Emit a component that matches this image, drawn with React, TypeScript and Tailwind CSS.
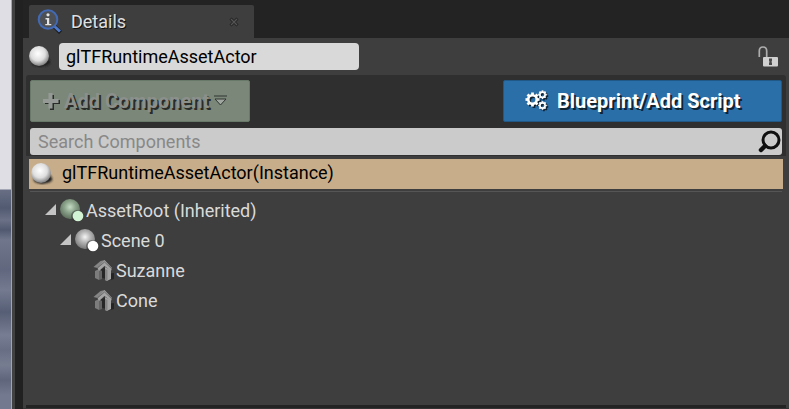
import type { ReactNode } from "react";

function InfoSearchIcon() {
  return (
    <svg width="26" height="26" viewBox="0 0 26 26" className="shrink-0">
      <path d="M17.5 17.5L23.5 23.5" stroke="#151515" strokeWidth="4" />
      <path d="M16.5 16.5L23 22.5" stroke="#4e78c8" strokeWidth="3" />
      <circle cx="11" cy="10.500" r="9.300" fill="#4d5055" stroke="#4269b4" strokeWidth="2" />
      <path d="M8.500 9H12.200V15H14.300V16.300H8.300V15H10V10.500H8.500Z" fill="#e4e4e4" />
      <circle cx="11" cy="5.800" r="1.600" fill="#e4e4e4" />
    </svg>
  );
}

function ActorIcon() {
  return (
    <svg width="24" height="24" viewBox="0 0 24 24" className="shrink-0">
      <defs>
        <radialGradient id="actor" cx="45%" cy="38%" r="60%">
          <stop offset="0" stopColor="#fff" />
          <stop offset=".6" stopColor="#dedede" />
          <stop offset="1" stopColor="#858585" />
        </radialGradient>
        <filter id="actorShade">
          <feGaussianBlur stdDeviation=".8" />
        </filter>
      </defs>
      <path d="M3 17L20 13L22.500 17Q22 21 12 22Q4 21 3 17Z" fill="#202020" filter="url(#actorShade)" />
      <circle cx="11" cy="11" r="10" fill="url(#actor)" />
    </svg>
  );
}

function SceneIcon({ green = false }: { green?: boolean }) {
  const id = green ? "root-sphere" : "scene-sphere";
  return (
    <svg width="26" height="26" viewBox="0 0 26 26" className="shrink-0">
      <defs>
        <radialGradient id={id} cx="50%" cy="40%" r="55%">
          <stop offset="0" stopColor={green ? "#c5dbc5" : "#f5f5f5"} />
          <stop offset=".5" stopColor={green ? "#8da58d" : "#b5b5b5"} />
          <stop offset="1" stopColor={green ? "#637663" : "#808080"} />
        </radialGradient>
      </defs>
      <circle cx="11" cy="11" r="10" fill={`url(#${id})`} />
      <circle cx="18" cy="18" r="6" fill="#333" opacity=".45" />
      <circle cx="19" cy="18" r="5.300" fill={green ? "#d3f3d5" : "#fff"} />
    </svg>
  );
}

function MeshIcon() {
  return (
    <svg width="22" height="24" viewBox="0 0 22 24" className="shrink-0">
      <path d="M13 15L21 14V20L14 22Z" fill="#242424" />
      <path d="M7 11L13 8V20L7 18Z" fill="#272727" />
      <path d="M2 12L6 10V21L2 19Z" fill="#7c7c7c" />
      <path d="M6 10L9 12V20L6 21Z" fill="#646464" />
      <path d="M12 8L18 11V20L14 22L12 21Z" fill="#a3a3a3" />
      <path d="M12 10L14.500 11V22L12 21Z" fill="#858585" />
      <path d="M0.500 8L7.500 2L12 1L4.500 9Z" fill="#858585" />
      <path d="M4.500 9L11.500 1L19 9L18 12L11.500 7L6 12Z" fill="#a5a5a5" />
      <path d="M4.500 9L11.500 3L19 10" fill="none" stroke="#555" strokeWidth=".7" />
    </svg>
  );
}

function LockIcon() {
  return (
    <svg width="21" height="22" viewBox="0 0 21 22" className="shrink-0">
      <path d="M1.300 11V5Q1.300 1 5 1Q8.700 1 8.700 5V12" fill="none" stroke="#adadad" strokeWidth="1.700" />
      <rect x="5" y="11" width="15" height="9.500" rx="1" fill="#d0d0d0" />
      <path d="M11 12.500H14V14.500L13.500 16L14 17V19H11V17L11.500 16L11 14.500Z" fill="#484848" />
    </svg>
  );
}

function gear(cx: number, cy: number, radius: number) {
  return (
    <g transform={`translate(${cx} ${cy})`}>
      <circle r={radius * 0.65} fill="none" stroke="currentColor" strokeWidth={radius * 0.4} />
      {[0, 45, 90, 135, 180, 225, 270, 315].map((angle) => (
        <path
          key={angle}
          d={`M0 ${-radius * 0.65}V${-radius * 1.08}`}
          stroke="currentColor"
          strokeWidth={radius * 0.42}
          transform={`rotate(${angle})`}
        />
      ))}
    </g>
  );
}

function GearsIcon() {
  const gears = <>{gear(7.5, 9.5, 6.5)}{gear(17.5, 4.7, 4)}{gear(17.5, 15.5, 4)}</>;
  return (
    <svg width="25" height="23" viewBox="0 0 25 23" className="shrink-0">
      <g className="text-[#102333]" transform="translate(1.4 1.4)">{gears}</g>
      <g className="text-white">{gears}</g>
    </svg>
  );
}

function TreeRow({ indent, expanded, icon, children }: { indent: string; expanded?: boolean; icon: ReactNode; children: ReactNode }) {
  return (
    <div className={`flex h-[30px] items-center ${indent}`}>
      {expanded && (
        <svg width="14" height="14" viewBox="0 0 14 14" className="mb-[3px] shrink-0">
          <path d="M0 12L11 1V12Z" fill="#c4c4c4" />
        </svg>
      )}
      {icon}
      <span className="whitespace-nowrap pl-[1px] text-[18px] text-[#dadada]">{children}</span>
    </div>
  );
}

export default function App() {
  return (
    <div className="flex h-[409px] w-[789px] overflow-hidden bg-[#3e3e3e] font-[Roboto,sans-serif] leading-none">
      <div className="w-[11px] shrink-0 bg-[linear-gradient(#dedee4_0px,#dedee4_189px,#686f85_190px,#515a71_208px,#6b7187_220px,#505970_230px,#70778d_240px,#60677e_270px,#747b91_290px,#565e75_312px,#777d92_335px,#686e84_350px,#777d91_365px,#5f667c_380px,#73798e_395px)]" />
      <div className="w-px shrink-0 bg-[#d9a323]" />
      <div className="w-[3px] shrink-0 bg-[#414141]" />
      <div className="w-2 shrink-0 bg-[#212121]" />

      <main className="flex w-[766px] flex-col">
        <header className="flex h-[38px] items-end bg-[#232323] pl-[6px]">
          <div className="flex h-[33px] w-[225px] items-center rounded-t-[2px] bg-[#3e3e3e] pl-[8px]">
            <InfoSearchIcon />
            <span className="pl-[8px] text-[18px] text-[#e0e0e0] [text-shadow:1px_1px_#111]">Details</span>
            <svg width="10" height="10" viewBox="0 0 10 10" className="ml-auto mr-[15px]">
              <path d="M1.500 1.500L8.500 8.500M8.500 1.500L1.500 8.500" stroke="#242424" strokeWidth="3" />
              <path d="M2 2L8 8M8 2L2 8" stroke="#555" strokeWidth="1.300" />
            </svg>
          </div>
        </header>

        <div className="flex h-[37px] items-center pl-[5px] pr-[10px]">
          <ActorIcon />
          <div className="ml-[7px] flex h-[27px] w-[300px] items-center rounded-[4px] bg-[#d9d9d9] pl-[7px] text-[18px] text-black">
            glTFRuntimeAssetActor
          </div>
          <div className="ml-auto"><LockIcon /></div>
        </div>

        <section className="ml-[3px] h-[81px] w-[760px] rounded-t-[3px] bg-[#2f2f2f] px-1 pt-[5px]">
          <div className="flex h-[42px] justify-between">
            <button className="flex w-[220px] items-center rounded-[2px] border border-[#687869] bg-[#7a8779] pl-[11px]">
              <svg width="19" height="19" viewBox="0 0 19 19">
                <path d="M10 3V18M3 10H18" stroke="#292c29" strokeWidth="4" />
                <path d="M8.500 1V16.500M1 9H16.500" stroke="#969a96" strokeWidth="4" />
              </svg>
              <span className="pl-[3px] text-[20px] font-bold text-[#8c908c] [text-shadow:2px_2px_#292c29]">Add Component</span>
              <svg width="14" height="12" viewBox="0 0 14 12" className="ml-[5px]">
                <path d="M0 1H13" stroke="#303530" />
                <path d="M1 4H12L6.500 10Z" fill="#a0a6a0" stroke="#303530" />
              </svg>
            </button>
            <button className="flex w-[279px] items-center rounded-[2px] border border-[#205987] bg-[#2a6fa8] pl-[21px] text-white">
              <GearsIcon />
              <span className="whitespace-nowrap pl-[7px] text-[20px] font-bold [text-shadow:2px_2px_#102333]">Blueprint/Add Script</span>
            </button>
          </div>
          <div className="mt-[6px] flex h-[27px] items-center justify-between rounded-[3px] bg-[#cbcbcb] pl-2 text-[18px] text-[#888]">
            <span>Search Components</span>
            <svg width="25" height="24" viewBox="0 0 25 24">
              <circle cx="14" cy="10" r="8" fill="none" stroke="#101010" strokeWidth="3" />
              <path d="M8 16L4 20" stroke="#101010" strokeWidth="4.500" strokeLinecap="round" />
            </svg>
          </div>
        </section>

        <div className="ml-[6px] mt-[3px] flex h-[30px] w-[754px] items-center bg-[#c7ad89] pl-[1px]">
          <ActorIcon />
          <span className="pb-[3px] pl-[8px] text-[18px] text-black">glTFRuntimeAssetActor(Instance)</span>
        </div>
        <div className="ml-[7px] mt-[2px] h-px w-[752px] bg-[#555]" />

        <div className="mt-[4px]">
          <TreeRow indent="pl-[22px]" expanded icon={<SceneIcon green />}>AssetRoot (Inherited)</TreeRow>
          <TreeRow indent="pl-[37px]" expanded icon={<SceneIcon />}>Scene 0</TreeRow>
          <TreeRow indent="pl-[70px]" icon={<MeshIcon />}>Suzanne</TreeRow>
          <TreeRow indent="pl-[70px]" icon={<MeshIcon />}>Cone</TreeRow>
        </div>

        <div className="ml-[3px] mt-auto h-[3px] w-[760px] bg-[#232323]" />
        <div className="h-px bg-[#333]" />
      </main>
    </div>
  );
}
